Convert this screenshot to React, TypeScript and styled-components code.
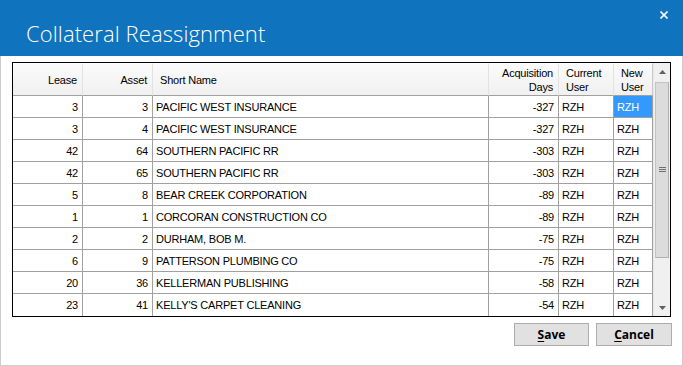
import React from "react";
import styled, { createGlobalStyle } from "styled-components";

interface Row {
  lease: number;
  asset: number;
  name: string;
  days: number;
  current: string;
  next: string;
}

const rows: Row[] = [
  { lease: 3, asset: 3, name: "PACIFIC WEST INSURANCE", days: -327, current: "RZH", next: "RZH" },
  { lease: 3, asset: 4, name: "PACIFIC WEST INSURANCE", days: -327, current: "RZH", next: "RZH" },
  { lease: 42, asset: 64, name: "SOUTHERN PACIFIC RR", days: -303, current: "RZH", next: "RZH" },
  { lease: 42, asset: 65, name: "SOUTHERN PACIFIC RR", days: -303, current: "RZH", next: "RZH" },
  { lease: 5, asset: 8, name: "BEAR CREEK CORPORATION", days: -89, current: "RZH", next: "RZH" },
  { lease: 1, asset: 1, name: "CORCORAN CONSTRUCTION CO", days: -89, current: "RZH", next: "RZH" },
  { lease: 2, asset: 2, name: "DURHAM, BOB M.", days: -75, current: "RZH", next: "RZH" },
  { lease: 6, asset: 9, name: "PATTERSON PLUMBING CO", days: -75, current: "RZH", next: "RZH" },
  { lease: 20, asset: 36, name: "KELLERMAN PUBLISHING", days: -58, current: "RZH", next: "RZH" },
  { lease: 23, asset: 41, name: "KELLY'S CARPET CLEANING", days: -54, current: "RZH", next: "RZH" },
];

const Arrow = ({ down }: { down?: boolean }) => (
  <svg width="7" height="4" viewBox="0 0 7 4">
    <path d={down ? "M0 0 H7 L3.5 4 Z" : "M0 4 H7 L3.5 0 Z"} fill="#606060" />
  </svg>
);

export default () => (
  <>
    <Global />
    <Window>
      <TitleBar>
        <Title>Collateral Reassignment</Title>
        <Close>
          <svg width="8" height="8" viewBox="0 0 8 8">
            <path d="M0.5 0.5 L7.5 7.5 M7.5 0.5 L0.5 7.5" stroke="#fff" strokeWidth="1.6" />
          </svg>
        </Close>
      </TitleBar>
      <Body>
        <Grid>
          <Table>
            <HeadCell align="right">Lease</HeadCell>
            <HeadCell align="right">Asset</HeadCell>
            <HeadCell align="left">Short Name</HeadCell>
            <HeadCell align="right">
              Acquisition
              <br />
              Days
            </HeadCell>
            <HeadCell align="left">
              Current
              <br />
              User
            </HeadCell>
            <HeadCell align="left" last>
              New
              <br />
              User
            </HeadCell>
            {rows.map((r, i) => (
              <React.Fragment key={i}>
                <Cell align="right">{r.lease}</Cell>
                <Cell align="right">{r.asset}</Cell>
                <Cell align="left">{r.name}</Cell>
                <Cell align="right">{r.days}</Cell>
                <Cell align="left">{r.current}</Cell>
                <Cell align="left" selected={i === 0}>
                  {r.next}
                </Cell>
              </React.Fragment>
            ))}
          </Table>
          <ScrollBar>
            <ArrowBox>
              <Arrow />
            </ArrowBox>
            <Track>
              <Thumb>
                <Grip />
              </Thumb>
            </Track>
            <ArrowBox>
              <Arrow down />
            </ArrowBox>
          </ScrollBar>
        </Grid>
        <Buttons>
          <Button>
            <u>S</u>ave
          </Button>
          <Button wide>
            <u>C</u>ancel
          </Button>
        </Buttons>
      </Body>
    </Window>
  </>
);

const Global = createGlobalStyle`
  html, body {
    margin: 0;
    padding: 0;
    background: #fff;
    overflow: hidden;
  }
`;

const Window = styled.div`
  width: 683px;
  height: 366px;
  display: flex;
  flex-direction: column;
  box-sizing: border-box;
`;

const TitleBar = styled.div`
  height: 56px;
  flex: none;
  background: #1073bd;
  color: #fff;
  display: flex;
  justify-content: space-between;
  align-items: flex-start;
  padding-left: 26px;
`;

const Title = styled.div`
  font-family: "Open Sans", "Noto Sans", sans-serif;
  font-weight: 300;
  font-size: 22px;
  line-height: 22px;
  margin-top: 22px;
  letter-spacing: 0.1px;
`;

const Close = styled.div`
  width: 8px;
  height: 8px;
  margin: 11px 15px 0 0;
  display: flex;
`;

const Body = styled.div`
  flex: 1;
  border: 1px solid #cccccc;
  border-top: none;
  padding: 6px 10px 0 11px;
  display: flex;
  flex-direction: column;
`;

const Grid = styled.div`
  display: flex;
  border: 1px solid #000;
  margin-right: 1px;
  height: 255px;
  box-sizing: border-box;
  background: #fff;
`;

const Table = styled.div`
  display: grid;
  grid-template-columns: 70px 70px 336px 70px 55px 39px;
  grid-template-rows: 33px repeat(10, 22px);
  align-content: start;
  font-family: "Liberation Sans", Arial, sans-serif;
  font-size: 11px;
  letter-spacing: -0.2px;
  color: #000;
`;

const HeadCell = styled.div<{ align: "left" | "right"; last?: boolean }>`
  box-sizing: border-box;
  background: linear-gradient(#fbfbfb, #f0f0f0);
  border-right: 1px solid ${(p) => (p.last ? "#c8c8c8" : "#e2e2e2")};
  border-bottom: 1px solid #a0a0a0;
  border-top: 1px solid #fff;
  display: flex;
  align-items: center;
  justify-content: ${(p) => (p.align === "right" ? "flex-end" : "flex-start")};
  text-align: ${(p) => p.align};
  padding: 0 ${(p) => (p.align === "right" ? "5px" : "0")} 0 ${(p) => (p.align === "left" ? "7px" : "0")};
  line-height: 14px;
`;

const Cell = styled.div<{ align: "left" | "right"; selected?: boolean }>`
  box-sizing: border-box;
  border-right: 1px solid #a0a0a0;
  border-bottom: 1px solid #a0a0a0;
  display: flex;
  align-items: center;
  justify-content: ${(p) => (p.align === "right" ? "flex-end" : "flex-start")};
  padding: 0 4px 0 3px;
  white-space: nowrap;
  background: ${(p) => (p.selected ? "#3399ff" : "#fff")};
  color: ${(p) => (p.selected ? "#fff" : "#000")};
  &:nth-last-child(-n + 6) {
    border-bottom: none;
  }
`;

const ScrollBar = styled.div`
  width: 17px;
  display: flex;
  flex-direction: column;
  background: #f0f0f0;
  border-left: 1px solid #e8e8e8;
`;

const ArrowBox = styled.div`
  height: 17px;
  flex: none;
  display: flex;
  align-items: center;
  justify-content: center;
`;

const Track = styled.div`
  flex: 1;
  padding: 2px 1px 0 1px;
`;

const Thumb = styled.div`
  height: 176px;
  box-sizing: border-box;
  background: #dcdcdc;
  border: 1px solid #c4c4c4;
  border-right-color: #b0b0b0;
  border-bottom-color: #b0b0b0;
  display: flex;
  align-items: center;
  justify-content: center;
`;

const Grip = styled.div`
  width: 7px;
  height: 5px;
  background: repeating-linear-gradient(#707070 0 1px, transparent 1px 2px);
  margin-top: -1px;
`;

const Buttons = styled.div`
  display: flex;
  justify-content: flex-end;
  gap: 7px;
  margin-top: 6px;
`;

const Button = styled.button<{ wide?: boolean }>`
  width: ${(p) => (p.wide ? "76px" : "75px")};
  height: 23px;
  background: #e1e1e1;
  border: 1px solid #adadad;
  border-radius: 0;
  font-family: "Open Sans", "Noto Sans", sans-serif;
  font-weight: 700;
  font-size: 12px;
  color: #000;
  padding: 0;
  u {
    text-decoration-thickness: 1px;
    text-underline-offset: 2px;
  }
`;
